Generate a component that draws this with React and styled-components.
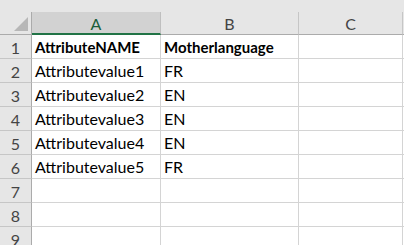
import React from 'react';
import styled, { createGlobalStyle } from 'styled-components';

const GlobalStyle = createGlobalStyle`
  html, body {
    margin: 0;
    padding: 0;
    background: #ffffff;
  }
  body {
    font-family: Lato, "Liberation Sans", sans-serif;
    width: 404px;
    height: 245px;
    overflow: hidden;
  }
`;

const Sheet = styled.div`
  display: flex;
  flex-direction: column;
  width: 404px;
  height: 245px;
  overflow: hidden;
  background: #ffffff;
`;

const TopStrip = styled.div`
  height: 12px;
  background: #e6e6e6;
  flex-shrink: 0;
`;

const Grid = styled.div`
  display: grid;
  grid-template-columns: 32px 129px 138px 104px 1fr;
  grid-auto-rows: 24px;
  grid-template-rows: 23px;
`;

const Corner = styled.div`
  position: relative;
  background: #e6e6e6;
  border-right: 1px solid #ababab;
  border-bottom: 1px solid #ababab;
  box-sizing: border-box;

  &::after {
    content: '';
    position: absolute;
    right: 3px;
    bottom: 3px;
    width: 0;
    height: 0;
    border-left: 14px solid transparent;
    border-bottom: 14px solid #b7b7b7;
  }
`;

const ColHead = styled.div`
  display: flex;
  align-items: center;
  justify-content: center;
  box-sizing: border-box;
  background: ${(p) => (p.$selected ? '#d2d2d2' : '#e6e6e6')};
  border-right: 1px solid ${(p) => (p.$selected ? '#bfbfbf' : '#c6c6c6')};
  border-bottom: ${(p) => (p.$selected ? '2px solid #217346' : '1px solid #ababab')};
  color: ${(p) => (p.$selected ? '#1b5e3a' : '#444444')};
  font-size: 16px;
  padding-top: ${(p) => (p.$selected ? '1px' : '0')};
`;

const RowHead = styled.div`
  display: flex;
  align-items: center;
  justify-content: center;
  box-sizing: border-box;
  background: #e6e6e6;
  border-right: 1px solid #ababab;
  border-bottom: 1px solid #c6c6c6;
  color: #444444;
  font-size: 16px;
  padding-top: 1px;
`;

const Cell = styled.div`
  display: flex;
  align-items: flex-end;
  box-sizing: border-box;
  padding: 0 3px 2px;
  border-right: 1px solid #d4d4d4;
  border-bottom: 1px solid #d4d4d4;
  color: #000000;
  font-size: ${(p) => (p.$bold ? '15px' : '16px')};
  font-weight: ${(p) => (p.$bold ? 700 : 400)};
  white-space: nowrap;
  overflow: hidden;
`;

const columns = ['A', 'B', 'C', ''];

const rows = [
  ['AttributeNAME', 'Motherlanguage'],
  ['Attributevalue1', 'FR'],
  ['Attributevalue2', 'EN'],
  ['Attributevalue3', 'EN'],
  ['Attributevalue4', 'EN'],
  ['Attributevalue5', 'FR'],
  ['', ''],
  ['', ''],
  ['', ''],
];

export default function App() {
  return (
    <>
      <GlobalStyle />
      <Sheet>
        <TopStrip />
        <Grid>
          <Corner />
          {columns.map((c, i) => (
            <ColHead key={i} $selected={c === 'A'}>
              {c}
            </ColHead>
          ))}
          {rows.map((r, i) => (
            <React.Fragment key={i}>
              <RowHead>{i + 1}</RowHead>
              <Cell $bold={i === 0}>{r[0]}</Cell>
              <Cell $bold={i === 0}>{r[1]}</Cell>
              <Cell />
              <Cell />
            </React.Fragment>
          ))}
        </Grid>
      </Sheet>
    </>
  );
}
